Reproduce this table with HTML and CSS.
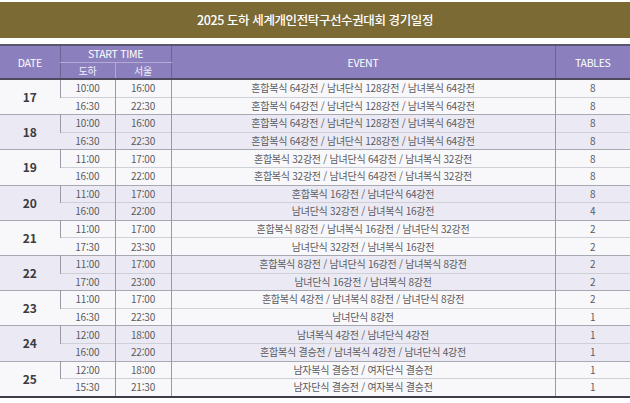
FILE: index.html
```html
<!DOCTYPE html>
<html lang="ko">
<head>
<meta charset="utf-8">
<title>2025 도하 세계개인전탁구선수권대회 경기일정</title>
<link rel="stylesheet" href="styles.css">
</head>
<body>
<div class="page">
  <h1 class="title">2025 도하 세계개인전탁구선수권대회 경기일정</h1>
  <table class="schedule">
    <colgroup>
      <col class="c-date"><col class="c-t1"><col class="c-t2"><col class="c-event"><col class="c-tables">
    </colgroup>
    <thead>
      <tr class="h1">
        <th rowspan="2" class="hdate">DATE</th>
        <th colspan="2" class="hstart">START TIME</th>
        <th rowspan="2">EVENT</th>
        <th rowspan="2" class="hlast">TABLES</th>
      </tr>
      <tr class="h2">
        <th class="sub">도하</th>
        <th class="sub">서울</th>
      </tr>
    </thead>
    <tbody class="odd">
      <tr><td rowspan="2" class="date">17</td><td class="t">10:00</td><td class="t">16:00</td><td class="ev">혼합복식 64강전 / 남녀단식 128강전 / 남녀복식 64강전</td><td class="n">8</td></tr>
      <tr class="r2"><td class="t">16:30</td><td class="t">22:30</td><td class="ev">혼합복식 64강전 / 남녀단식 128강전 / 남녀복식 64강전</td><td class="n">8</td></tr>
    </tbody>
    <tbody class="even">
      <tr><td rowspan="2" class="date">18</td><td class="t">10:00</td><td class="t">16:00</td><td class="ev">혼합복식 64강전 / 남녀단식 128강전 / 남녀복식 64강전</td><td class="n">8</td></tr>
      <tr class="r2"><td class="t">16:30</td><td class="t">22:30</td><td class="ev">혼합복식 64강전 / 남녀단식 128강전 / 남녀복식 64강전</td><td class="n">8</td></tr>
    </tbody>
    <tbody class="odd">
      <tr><td rowspan="2" class="date">19</td><td class="t">11:00</td><td class="t">17:00</td><td class="ev">혼합복식 32강전 / 남녀단식 64강전 / 남녀복식 32강전</td><td class="n">8</td></tr>
      <tr class="r2"><td class="t">16:00</td><td class="t">22:00</td><td class="ev">혼합복식 32강전 / 남녀단식 64강전 / 남녀복식 32강전</td><td class="n">8</td></tr>
    </tbody>
    <tbody class="even">
      <tr><td rowspan="2" class="date">20</td><td class="t">11:00</td><td class="t">17:00</td><td class="ev">혼합복식 16강전 / 남녀단식 64강전</td><td class="n">8</td></tr>
      <tr class="r2"><td class="t">16:00</td><td class="t">22:00</td><td class="ev">남녀단식 32강전 / 남녀복식 16강전</td><td class="n">4</td></tr>
    </tbody>
    <tbody class="odd">
      <tr><td rowspan="2" class="date">21</td><td class="t">11:00</td><td class="t">17:00</td><td class="ev">혼합복식 8강전 / 남녀복식 16강전 / 남녀단식 32강전</td><td class="n">2</td></tr>
      <tr class="r2"><td class="t">17:30</td><td class="t">23:30</td><td class="ev">남녀단식 32강전 / 남녀복식 16강전</td><td class="n">2</td></tr>
    </tbody>
    <tbody class="even">
      <tr><td rowspan="2" class="date">22</td><td class="t">11:00</td><td class="t">17:00</td><td class="ev">혼합복식 8강전 / 남녀단식 16강전 / 남녀복식 8강전</td><td class="n">2</td></tr>
      <tr class="r2"><td class="t">17:00</td><td class="t">23:00</td><td class="ev">남녀단식 16강전 / 남녀복식 8강전</td><td class="n">2</td></tr>
    </tbody>
    <tbody class="odd">
      <tr><td rowspan="2" class="date">23</td><td class="t">11:00</td><td class="t">17:00</td><td class="ev">혼합복식 4강전 / 남녀복식 8강전 / 남녀단식 8강전</td><td class="n">2</td></tr>
      <tr class="r2"><td class="t">16:30</td><td class="t">22:30</td><td class="ev">남녀단식 8강전</td><td class="n">1</td></tr>
    </tbody>
    <tbody class="even">
      <tr><td rowspan="2" class="date">24</td><td class="t">12:00</td><td class="t">18:00</td><td class="ev">남녀복식 4강전 / 남녀단식 4강전</td><td class="n">1</td></tr>
      <tr class="r2"><td class="t">16:00</td><td class="t">22:00</td><td class="ev">혼합복식 결승전 / 남녀복식 4강전 / 남녀단식 4강전</td><td class="n">1</td></tr>
    </tbody>
    <tbody class="odd last">
      <tr><td rowspan="2" class="date">25</td><td class="t">12:00</td><td class="t">18:00</td><td class="ev">남자복식 결승전 / 여자단식 결승전</td><td class="n">1</td></tr>
      <tr class="r2"><td class="t">15:30</td><td class="t">21:30</td><td class="ev">남자단식 결승전 / 여자복식 결승전</td><td class="n">1</td></tr>
    </tbody>
  </table>
</div>
</body>
</html>
```

FILE: styles.css
```css
html, body {
  margin: 0;
  padding: 0;
  background: #ffffff;
}

.page {
  width: 630px;
  padding-top: 2px;
  font-family: "Noto Sans CJK KR", "Noto Sans", sans-serif;
}

.title {
  margin: 0;
  height: 36px;
  line-height: 36px;
  background: #7c6a35;
  color: #ffffff;
  font-size: 12.5px;
  font-weight: 500;
  text-align: center;
  letter-spacing: -0.4px;
}

.schedule {
  margin-top: 6px;
  width: 630px;
  border-collapse: collapse;
  table-layout: fixed;
  border-top: 2px solid #5b5670;
  border-bottom: 2px solid #3e3e48;
}

.c-date { width: 60px; }
.c-t1 { width: 55px; }
.c-t2 { width: 56px; }
.c-event { width: 384px; }
.c-tables { width: 75px; }

.schedule th {
  background: #8b80bd;
  color: #ffffff;
  font-weight: 400;
  font-size: 10.5px;
  padding: 0;
  border-left: 1px solid #6c6394;
  letter-spacing: -0.3px;
}

.schedule th.hdate { border-left: none; }

.schedule thead {
  border-bottom: 2px solid #4d4a5e;
}

.h1 { height: 17px; }
.h2 { height: 17px; }

.schedule th.hstart {
  border-bottom: 1px solid #b3abd6;
}

.schedule th.sub {
  color: #f1eefa;
  font-size: 10px;
}

.schedule th.sub + th.sub {
  border-left: 1px solid #b3abd6;
}

.schedule td {
  padding: 0;
  height: 16.6px;
  font-size: 10px;
  color: #5a5a60;
  text-align: center;
  border-left: 1px solid #9a9aa4;
  line-height: 16px;
}

.schedule td:first-child { border-left: none; }

.schedule td.t {
  letter-spacing: -0.2px;
}

.schedule td.ev {
  letter-spacing: -0.25px;
}

.schedule td.date {
  font-size: 12px;
  font-weight: 700;
  color: #3a3a40;
  letter-spacing: 0;
}

.schedule tr.r2 td {
  border-top: 1px solid #cfcfd8;
}

.schedule tbody {
  border-top: 1px solid #a8a8b2;
}

.schedule tbody.odd td { background: #f8f8fb; }
.schedule tbody.even td { background: #ebeaf4; }
```
